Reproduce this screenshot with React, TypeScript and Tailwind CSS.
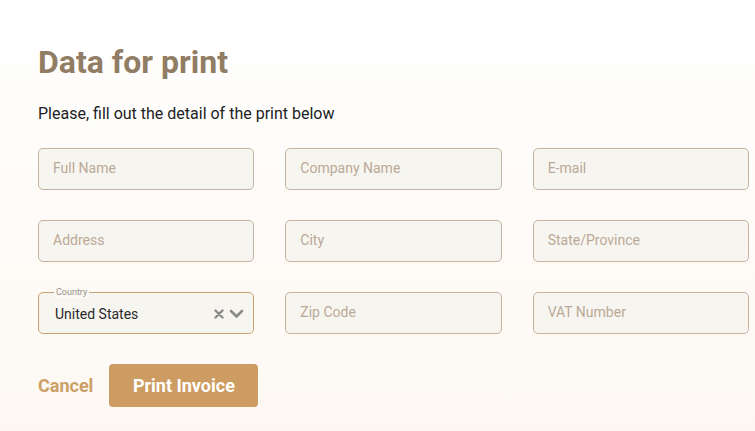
import React from "react";

const Field = ({ label }: { label: string }) => (
  <div className="h-[42px] rounded-[5px] border border-[#c7b39c] bg-[#f7f5f0] flex items-center px-[14px] pb-[1px]">
    <span className="text-[14px] text-[#bba997]">{label}</span>
  </div>
);

export default function App() {
  return (
    <div
      className="min-h-[431px] w-full bg-gradient-to-b from-[#ffffff] to-[#fdf8f2] pl-[38px] pt-[42px]"
      style={{ fontFamily: "Roboto, 'Liberation Sans', sans-serif" }}
    >
      <h1 className="text-[32px] leading-[40px] font-bold text-[#917c64]">Data for print</h1>
      <p className="mt-[22px] text-[16px] leading-[20px] text-[#222222]">Please, fill out the detail of the print below</p>
      <div className="mt-[24px] grid w-[711px] grid-cols-3 gap-x-[31px] gap-y-[30px]">
        <Field label="Full Name" />
        <Field label="Company Name" />
        <Field label="E-mail" />
        <Field label="Address" />
        <Field label="City" />
        <Field label="State/Province" />
        <div className="relative h-[42px] rounded-[5px] border border-[#cba173] bg-[#f7f5f0] flex items-center pl-[16px] pr-[9px]">
          <span className="absolute left-[15px] top-[-7px] bg-[#fbf9f5] px-[2px] text-[9px] leading-[12px] text-[#9b9186]">Country</span>
          <span className="flex-1 pt-[2px] text-[14px] text-[#2a2a2a]">United States</span>
          <svg width="10" height="10" viewBox="0 0 10 10" className="mr-[5px] mt-[2px]">
            <path d="M1.5 1.5 L8.5 8.5 M8.5 1.5 L1.5 8.5" stroke="#8a8a8a" strokeWidth="2.4" strokeLinecap="round" />
          </svg>
          <svg width="15" height="11" viewBox="0 0 15 11" className="mt-[1px]">
            <path d="M2 3 L7.5 8.5 L13 3" stroke="#8a8a8a" strokeWidth="2.6" fill="none" strokeLinecap="round" strokeLinejoin="round" />
          </svg>
        </div>
        <Field label="Zip Code" />
        <Field label="VAT Number" />
      </div>
      <div className="mt-[30px] flex items-center gap-[16px]">
        <span className="text-[18px] font-bold text-[#cca066]">Cancel</span>
        <button className="h-[43px] w-[149px] rounded-[4px] bg-[#cc9c63] text-[18px] font-bold text-white">Print Invoice</button>
      </div>
    </div>
  );
}
